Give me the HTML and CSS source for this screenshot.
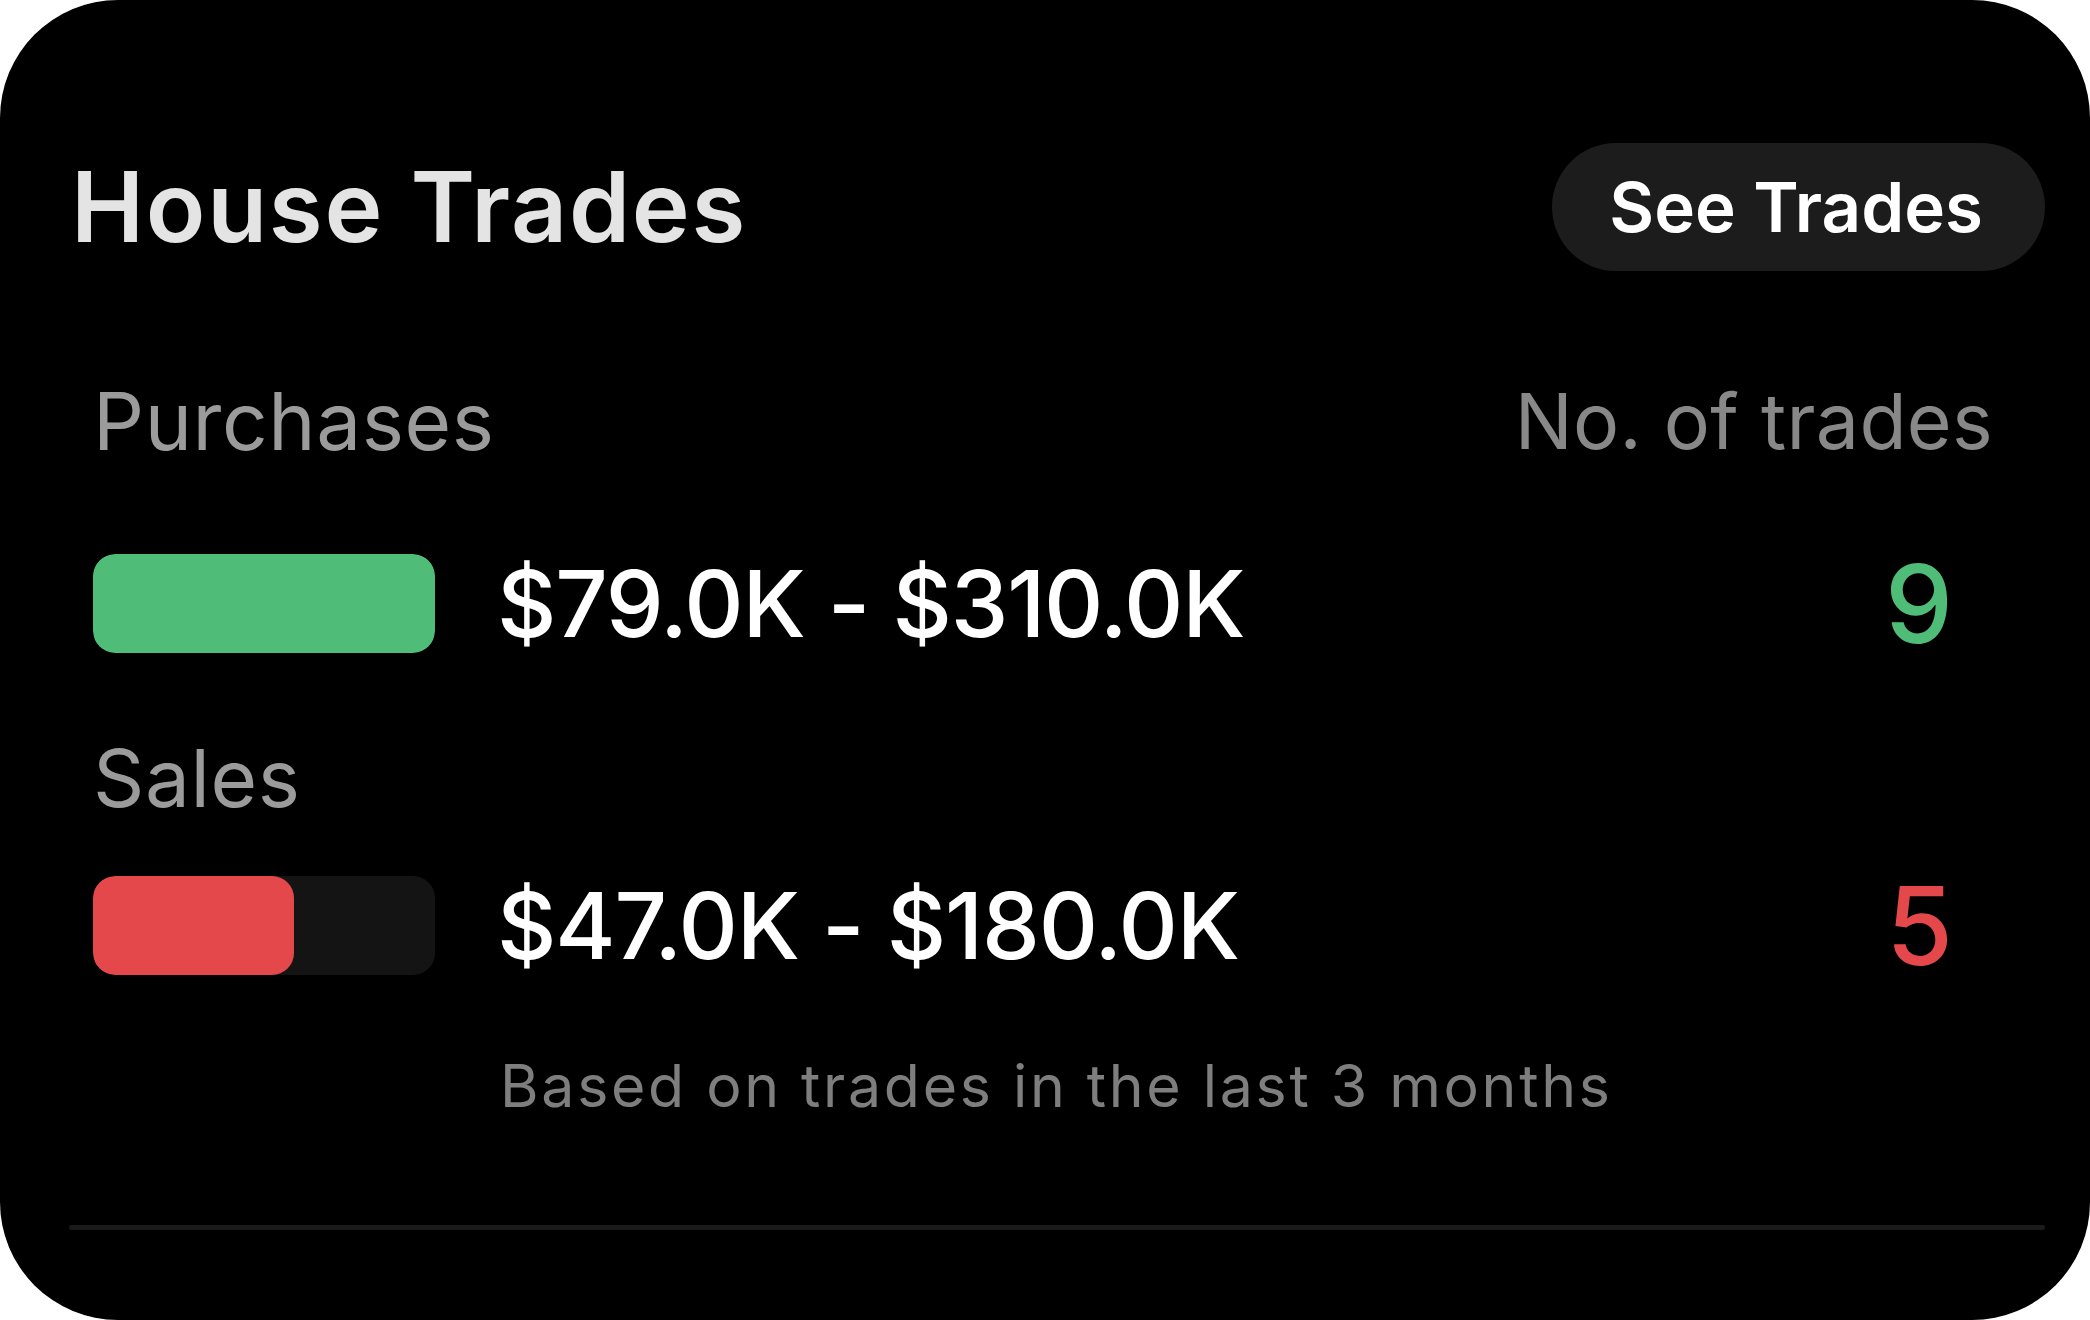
FILE: index.html
```html
<!DOCTYPE html>
<html lang="en">
<head>
<meta charset="utf-8">
<title>House Trades</title>
<link rel="stylesheet" href="styles.css">
</head>
<body>
<div class="card">
  <div class="header">
    <h1 class="title">House Trades</h1>
    <button class="pill">See Trades</button>
  </div>

  <div class="body">
    <div class="label-row">
      <span class="label">Purchases</span>
      <span class="label label-right">No. of trades</span>
    </div>

    <div class="bar-row">
      <div class="track"><div class="fill fill-green" style="width:100%"></div></div>
      <span class="value">$79.0K - $310.0K</span>
      <span class="count count-green">9</span>
    </div>

    <div class="label-row label-row-sales">
      <span class="label">Sales</span>
    </div>

    <div class="bar-row bar-row-sales">
      <div class="track"><div class="fill fill-red" style="width:58.8%"></div></div>
      <span class="value">$47.0K - $180.0K</span>
      <span class="count count-red">5</span>
    </div>

    <p class="note">Based on trades in the last 3 months</p>
  </div>

  <div class="divider"></div>
</div>
</body>
</html>
```

FILE: styles.css
```css
* { box-sizing: border-box; }

html, body {
  margin: 0;
  padding: 0;
  background: #ffffff;
}

body {
  font-family: Inter, "Noto Sans", "Liberation Sans", sans-serif;
  width: 2090px;
  height: 1320px;
  overflow: hidden;
}

.card {
  width: 2090px;
  height: 1320px;
  background: #000000;
  border-radius: 118px;
  padding: 143px 45px 0 69px;
  display: flex;
  flex-direction: column;
}

.header {
  display: flex;
  justify-content: space-between;
  align-items: center;
  height: 128px;
}

.title {
  margin: 0 0 0 2px;
  font-size: 98px;
  line-height: 128px;
  font-weight: 600;
  color: #e4e4e4;
  letter-spacing: 1.7px;
}

.pill {
  height: 128px;
  padding: 0 62px 0 57px;
  border: none;
  border-radius: 64px;
  background: #1c1c1c;
  color: #ffffff;
  font-family: inherit;
  font-size: 69px;
  font-weight: 600;
  line-height: 128px;
}

.body {
  padding-left: 24px;
  display: flex;
  flex-direction: column;
}

.label-row {
  margin-top: 100px;
  height: 100px;
  display: flex;
  justify-content: space-between;
  align-items: center;
  padding-right: 52px;
}

.label-row-sales {
  margin-top: 75px;
}

.label {
  font-size: 80px;
  line-height: 100px;
  font-weight: 400;
  color: #9b9b9b;
  letter-spacing: 0.6px;
}

.label-right {
  font-size: 77px;
  color: #888888;
  letter-spacing: 0.3px;
}

.bar-row {
  margin-top: 83px;
  height: 99px;
  display: flex;
  align-items: center;
  padding-right: 92px;
}

.bar-row-sales {
  margin-top: 48px;
}

.track {
  width: 342px;
  height: 99px;
  border-radius: 22px;
  background: #141414;
  overflow: hidden;
  flex: none;
}

.fill {
  height: 100%;
  border-radius: 22px;
}

.fill-green { background: #4fbd78; }
.fill-red { background: #e5484a; }

.value {
  margin-left: 62px;
  font-size: 92px;
  line-height: 99px;
  font-weight: 500;
  color: #ffffff;
  letter-spacing: -1.2px;
  flex: 1;
}

.count {
  font-size: 108px;
  line-height: 99px;
  font-weight: 500;
}

.count-green { color: #4fbd78; }
.count-red { color: #e5484a; }

.note {
  margin: 76px 0 0 407px;
  height: 70px;
  font-size: 59px;
  line-height: 70px;
  color: #7e7e7e;
  letter-spacing: 2.7px;
}

.divider {
  margin-top: 104px;
  height: 5px;
  background: #1a1a1a;
  border-radius: 3px;
}
```
